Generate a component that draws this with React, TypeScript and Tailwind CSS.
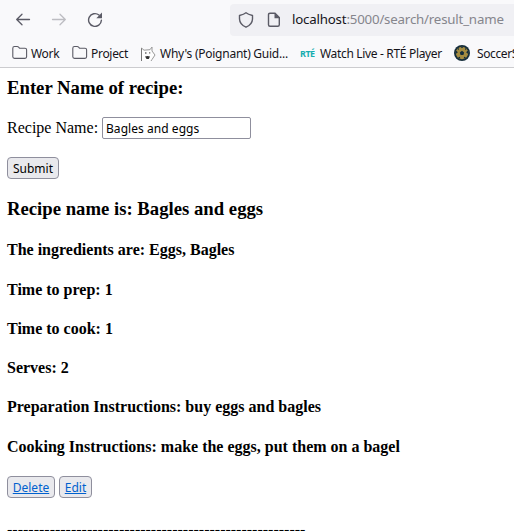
import React from 'react';

function Folder() {
  return (
    <svg className="mb-px h-4 w-4 shrink-0" viewBox="0 0 16 16" fill="none" stroke="#5b5b66" strokeWidth="1.1">
      <path d="M.8 3.2Q.8 1.5 2.5 1.5H5.2Q6 1.5 6.6 2.2L7.5 3.2H13Q14.6 3.2 14.6 4.8V11.8Q14.6 13.4 13 13.4H2.5Q.8 13.4 .8 11.8Z" />
    </svg>
  );
}

function FoxIcon() {
  return (
    <svg className="h-4 w-4 shrink-0" viewBox="0 0 16 16" fill="none">
      <path d="M1.5 14V2L4 4.2L10 3.7L12 1V5L15 9L12 13.5L11 15" fill="#fdfdfd" stroke="#999" strokeWidth="1" />
      <path d="M1.5 2.5V15" stroke="#777" />
      <path d="M5 7H6.5M9 6.8H10.3" stroke="#666" strokeWidth="1.3" />
      <path d="M5 10.5Q7.7 9.5 10 10.5L8.8 13H6.6Z" fill="#333" />
    </svg>
  );
}

function BallIcon() {
  return (
    <svg className="mb-px h-4 w-4 shrink-0" viewBox="0 0 16 16">
      <circle cx="8" cy="8" r="8" fill="#162e3c" />
      <circle cx="8" cy="8" r="6.2" fill="#a58c40" />
      <path d="M8 5.8L10.2 7.4L9.4 10H6.6L5.8 7.4ZM6.4 1.8L8 3.3L9.6 1.8ZM13.9 5.5L12.1 7.3L14.2 9ZM2.1 5.5L3.9 7.3L1.8 9ZM4 12.3L6 11.8L6.2 14ZM12 12.3L10 11.8L9.8 14ZM3 3.4L5 3.2L4.6 5.3ZM13 3.4L11 3.2L11.4 5.3Z" fill="#162e3c" />
    </svg>
  );
}

function Browser() {
  return (
    <header className="h-[68px] border-b border-[#cccccf] bg-[#f9f9fb] font-['Noto_Sans','Open_Sans',sans-serif]">
      <div className="flex h-[38px] items-center">
        <svg className="ml-[15px] h-4 w-4 shrink-0" viewBox="0 0 16 16" fill="none" stroke="#5b5b66" strokeWidth="1.3" strokeLinecap="round" strokeLinejoin="round">
          <path d="M1.7 8.5H14.5M7 3.3L1.7 8.5L7 13.7" />
        </svg>
        <svg className="ml-5 h-4 w-4 shrink-0" viewBox="0 0 16 16" fill="none" stroke="#bdbdc2" strokeWidth="1.3" strokeLinecap="round" strokeLinejoin="round">
          <path d="M1.5 8.5H14.3M9 3.3L14.3 8.5L9 13.7" />
        </svg>
        <svg className="ml-5 h-4 w-4 shrink-0" viewBox="0 0 16 16" fill="none">
          <path d="M12 4A6.4 6.4 0 1 0 14.4 9.3" stroke="#5b5b66" strokeWidth="1.4" strokeLinecap="round" />
          <path d="M15 1.5V7.2H9.3Z" fill="#5b5b66" />
        </svg>
        <div className="mt-[1px] ml-[127px] flex h-8 flex-1 items-center rounded-l bg-[#f0f0f4] text-[13.3px] text-[#85858c]">
          <svg className="ml-2 h-4 w-4 shrink-0" viewBox="0 0 16 16" fill="none" stroke="#5b5b66" strokeWidth="1.4" strokeLinejoin="round">
            <path d="M8 .8Q10 2.5 14.5 3.5V7Q14.3 12.5 8 15.2Q1.7 12.5 1.5 7V3.5Q6 2.5 8 .8Z" />
          </svg>
          <svg className="ml-3 h-4 w-4 shrink-0" viewBox="0 0 16 16" fill="none">
            <path d="M4 1.2H9L13.3 5.5V12.8Q13.3 14.3 11.8 14.3H4Q2.5 14.3 2.5 12.8V2.7Q2.5 1.2 4 1.2Z" stroke="#5b5b66" strokeWidth="1.4" />
            <path d="M8.5 1V6.2H13.8Z" fill="#5b5b66" />
          </svg>
          <span className="ml-[10px] pt-px whitespace-nowrap tracking-[-0.2px]"><span className="text-[#15141a]">localhost</span>:5000/search/result_name</span>
        </div>
      </div>
      <nav className="flex h-[29px] items-center overflow-hidden whitespace-nowrap pt-[2px] pl-3 text-[12px] text-[#15141a]">
        <div className="flex w-[60px] shrink-0 items-center gap-[3px]"><Folder /><span className="tracking-[-0.3px]">Work</span></div>
        <div className="flex w-[68px] shrink-0 items-center gap-[3px]"><Folder /><span className="tracking-[-0.3px]">Project</span></div>
        <div className="flex w-[160px] shrink-0 items-center gap-1"><FoxIcon /><span className="tracking-[-0.25px]">Why's (Poignant) Guid...</span></div>
        <div className="flex w-[154px] shrink-0 items-center gap-1">
          <span className="w-4 text-[9px] font-bold tracking-[-0.5px] text-[#17adb0]">RTÉ</span>
          <span className="tracking-[-0.33px]">Watch Live - RTÉ Player</span>
        </div>
        <div className="flex shrink-0 items-center gap-[7px]"><BallIcon /><span className="tracking-[-0.4px]">SoccerS</span></div>
      </nav>
    </header>
  );
}

const buttonStyle = "flex h-[22px] items-center justify-center rounded-[4px] border border-[#8f8f9d] bg-[#e9e9ed] pt-px font-['Noto_Sans','Open_Sans',sans-serif] text-[12px]";

function Detail({ children }: { children: React.ReactNode }) {
  return <h4 className="mb-[21.25px] text-[16px] font-bold leading-[18px]">{children}</h4>;
}

export default function App() {
  return (
    <div className="h-[531px] w-[514px] overflow-hidden bg-white text-black">
      <Browser />
      <main className="pt-[9px] pl-[7px] font-['Liberation_Serif',serif] text-[16px]">
        <h3 className="text-[18.72px] font-bold leading-[22px]">Enter Name of recipe:</h3>
        <form onSubmit={(e) => e.preventDefault()}>
          <div className="mt-[18px] flex h-[22px] items-center">
            <label htmlFor="recipe" className="w-[95px] whitespace-nowrap">Recipe Name:</label>
            <input id="recipe" defaultValue="Bagles and eggs" className="h-[22px] w-[149px] rounded-[2px] border border-[#8f8f9d] bg-white px-[3px] pt-px font-['Noto_Sans','Open_Sans',sans-serif] text-[12px] tracking-[0.05px]" />
          </div>
          <button className={buttonStyle + ' mt-[18px] w-[52px]'}>Submit</button>
        </form>
        <h3 className="mt-[19px] mb-[21.4px] text-[18.72px] font-bold leading-[22px]">Recipe name is: Bagles and eggs</h3>
        <Detail>The ingredients are: Eggs, Bagles</Detail>
        <Detail>Time to prep: 1</Detail>
        <Detail>Time to cook: 1</Detail>
        <Detail>Serves: 2</Detail>
        <Detail>Preparation Instructions: buy eggs and bagles</Detail>
        <Detail>Cooking Instructions: make the eggs, put them on a bagel</Detail>
        <div className="-mt-[0.9px] flex gap-1">
          <button className={buttonStyle + ' w-12'}><a className="text-[#0061ce] underline">Delete</a></button>
          <button className={buttonStyle + ' w-[33px]'}><a className="text-[#0061ce] underline">Edit</a></button>
        </div>
        <p className="mt-[23px] whitespace-nowrap leading-[18px]">--------------------------------------------------------</p>
      </main>
    </div>
  );
}
